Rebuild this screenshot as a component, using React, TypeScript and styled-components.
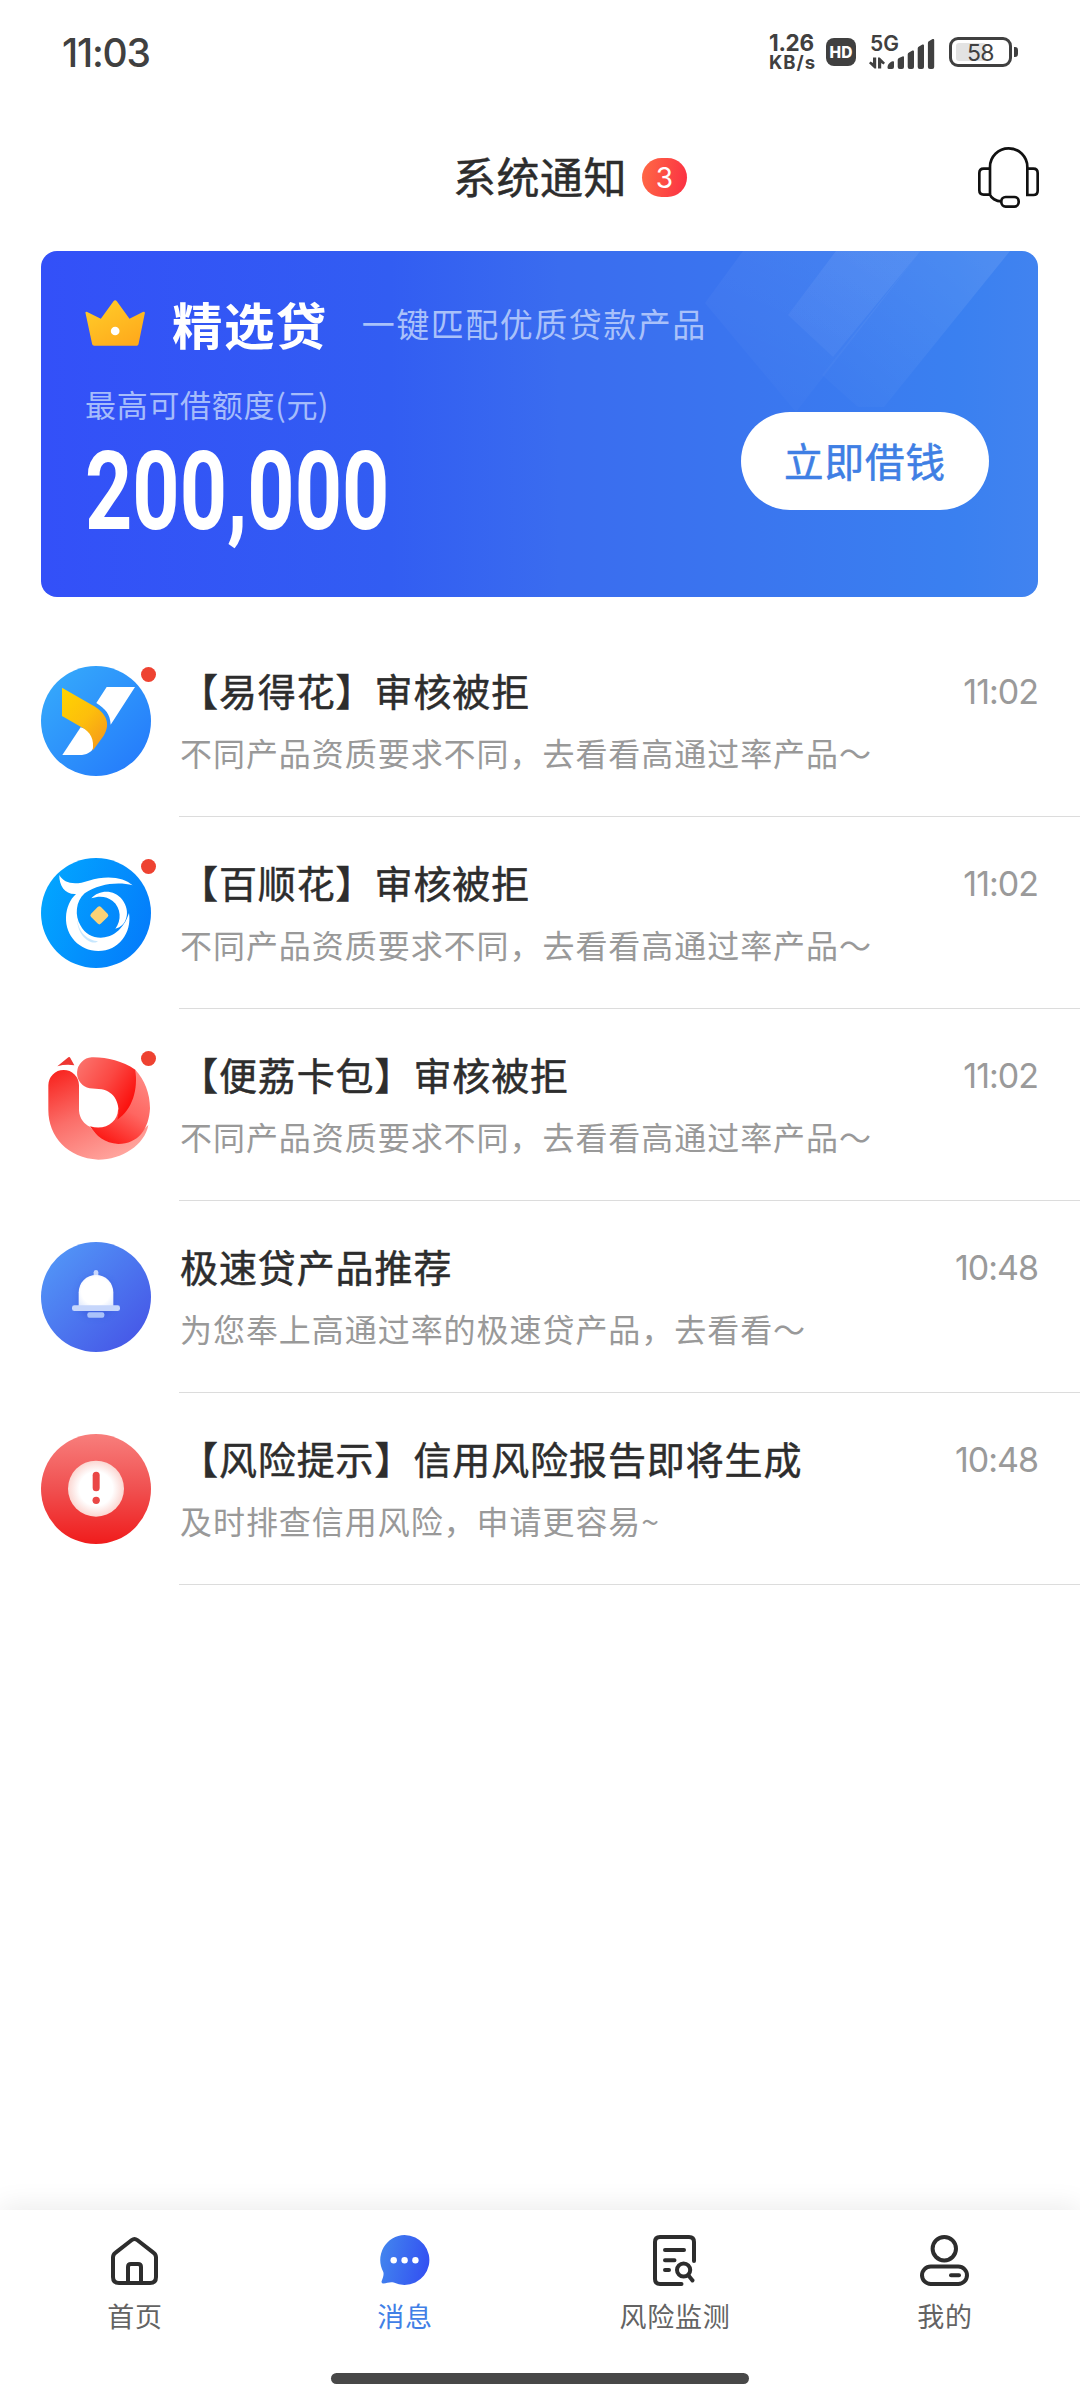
import React from "react";
import styled, { createGlobalStyle } from "styled-components";

const CJK = `"Noto Sans CJK SC", sans-serif`;
const LATIN = `Inter, "Noto Sans CJK SC", sans-serif`;

const GlobalStyle = createGlobalStyle`
  * { box-sizing: border-box; }
  body { margin: 0; background: #fff; font-family: ${CJK}; -webkit-font-smoothing: antialiased; }
  svg { display: block; }
`;

const Screen = styled.div`
  width: 1080px;
  height: 2400px;
  display: flex;
  flex-direction: column;
  overflow: hidden;
  background: #fff;
  color: #2d2d2d;
  white-space: nowrap;
`;

/* ---------- status bar ---------- */
const StatusBar = styled.header`
  height: 104px;
  padding: 0 62px 0 62px;
  display: flex;
  align-items: center;
  justify-content: space-between;
  color: #404040;
  font-family: ${LATIN};
`;
const Clock = styled.div`
  font-size: 39px;
  line-height: 48px;
  font-weight: 500;
  letter-spacing: -1.2px;
  padding-top: 1px;
`;
const StatusRight = styled.div`
  display: flex;
  align-items: center;
`;
const NetSpeed = styled.div`
  width: 57px;
  padding-top: 1px;
  display: flex;
  flex-direction: column;
  font-weight: 700;
`;
const SpeedValue = styled.span`
  font-size: 22.5px;
  line-height: 20px;
  letter-spacing: -0.3px;
`;
const SpeedUnit = styled.span`
  font-size: 18.5px;
  line-height: 19px;
  letter-spacing: 1px;
`;
const HdBadge = styled.div`
  width: 30px;
  height: 28px;
  margin-right: 13px;
  border-radius: 8px;
  background: #404040;
  color: #fff;
  display: flex;
  align-items: center;
  justify-content: center;
  font-size: 15.5px;
  font-weight: 800;
`;
const Signal = styled.div`
  width: 66px;
  height: 34px;
  margin-right: 14px;
  position: relative;
`;
const SignalLabel = styled.span`
  position: absolute;
  left: 1px;
  top: -1px;
  font-size: 21px;
  line-height: 20px;
  font-weight: 600;
`;
const Battery = styled.div`
  width: 63px;
  height: 30px;
  border: 3px solid #404040;
  border-radius: 9px;
  padding: 3px 4px;
  position: relative;
  display: flex;
`;
const BatteryFill = styled.div`
  width: 30px;
  border-radius: 3px;
  background: #e3e3e3;
`;
const BatteryText = styled.span`
  position: absolute;
  inset: 0;
  text-align: center;
  font-size: 23px;
  line-height: 26px;
  letter-spacing: -0.5px;
`;
const BatteryTip = styled.div`
  width: 4px;
  height: 10px;
  margin-left: 2px;
  border-radius: 0 3px 3px 0;
  background: #404040;
`;

/* ---------- title bar ---------- */
const TitleBar = styled.div`
  height: 147px;
  padding: 0 41px;
  display: grid;
  grid-template-columns: 1fr auto 1fr;
  align-items: center;
`;
const Title = styled.h1`
  grid-column: 2;
  margin: 0;
  padding-bottom: 5px;
  font-size: 43px;
  line-height: 60px;
  font-weight: 400;
  -webkit-text-stroke: 0.5px currentColor;
  letter-spacing: 0.5px;
`;
const TitleSide = styled.div`
  display: flex;
  align-items: center;
  justify-content: space-between;
  padding-left: 15px;
`;
const CountBadge = styled.span`
  width: 45px;
  height: 39px;
  border-radius: 20px;
  background: linear-gradient(100deg, #ff6a45, #fb2f43);
  color: #fff;
  display: flex;
  align-items: center;
  justify-content: center;
  font: 400 28px/38px ${LATIN};
`;

/* ---------- promo card ---------- */
const Card = styled.section`
  width: 997px;
  height: 346px;
  margin-left: 41px;
  padding: 41px 49px 0 44px;
  border-radius: 16px;
  background: linear-gradient(90deg, #3350f8 0%, #325df2 35%, #3a6cef 52%, #3a75ef 70%, #3a80f0 92%, #4183f0 100%);
  position: relative;
  overflow: hidden;
  color: #fff;
`;
const CardPattern = styled.svg`
  position: absolute;
  inset: 0;
`;
const CardHead = styled.div`
  height: 62px;
  display: flex;
  align-items: center;
  position: relative;
`;
const CardName = styled.h2`
  margin: 0 34px 0 27px;
  padding-bottom: 1px;
  font-size: 50.5px;
  line-height: 62px;
  font-weight: 700;
  letter-spacing: 1.4px;
`;
const CardSlogan = styled.span`
  font-size: 33px;
  letter-spacing: 1.5px;
  color: #a9c1fa;
`;
const CardBody = styled.div`
  display: flex;
  justify-content: space-between;
  position: relative;
`;
const Quota = styled.div`
  padding-top: 29px;
`;
const QuotaLabel = styled.div`
  font-size: 31px;
  line-height: 42px;
  letter-spacing: 0.7px;
  color: #a5bcfb;
`;
const QuotaValue = styled.div`
  margin-top: 17px;
  font: 700 109px/100px Roboto, sans-serif;
  transform: scaleX(0.757);
  transform-origin: 0 50%;
`;
const BorrowButton = styled.button`
  width: 248px;
  height: 98px;
  margin-top: 58px;
  padding: 0 0 3px;
  border: 0;
  border-radius: 49px;
  background: #fff;
  color: #3f7fe4;
  font: 400 39.5px/56px ${CJK};
  -webkit-text-stroke: 0.6px currentColor;
  letter-spacing: 1px;
`;

/* ---------- message list ---------- */
const List = styled.main`
  flex: 1;
  padding-top: 28px;
`;
const Row = styled.article`
  height: 192px;
  padding-left: 41px;
  display: flex;
`;
const Avatar = styled.div`
  width: 110px;
  height: 110px;
  margin: 41px 28px 0 0;
  position: relative;
`;
const UnreadDot = styled.i`
  position: absolute;
  right: -5px;
  top: 1px;
  width: 15px;
  height: 15px;
  border-radius: 50%;
  background: #ee4231;
`;
const RowContent = styled.div`
  flex: 1;
  padding: 40px 42px 0 1px;
  border-bottom: 1px solid #dcdcdc;
`;
const RowTop = styled.div`
  display: flex;
  justify-content: space-between;
  height: 54px;
`;
const RowTitle = styled.h3`
  margin: -2px 0 0;
  font-size: 38px;
  line-height: 54px;
  font-weight: 400;
  -webkit-text-stroke: 0.5px currentColor;
  letter-spacing: 0.9px;
`;
const RowTime = styled.time`
  font: 400 34px/54px ${LATIN};
  letter-spacing: -1px;
  color: #9a9a9a;
`;
const RowText = styled.p`
  margin: 9px 0 0;
  font-size: 32px;
  line-height: 48px;
  letter-spacing: 0.95px;
  color: #999;
`;

/* ---------- tab bar ---------- */
const TabBar = styled.nav`
  height: 190px;
  background: #fff;
  box-shadow: 0 -4px 26px rgba(0, 0, 0, 0.08);
  display: flex;
  flex-direction: column;
  align-items: center;
`;
const Tabs = styled.div`
  width: 1080px;
  height: 163px;
  display: grid;
  grid-template-columns: repeat(4, 1fr);
`;
const Tab = styled.div<{ $active?: boolean }>`
  padding-top: 25px;
  display: flex;
  flex-direction: column;
  align-items: center;
  font-size: 27px;
  line-height: 40px;
  letter-spacing: 0.8px;
  color: ${(p) => (p.$active ? "#4180e6" : "#636363")};
`;
const TabLabel = styled.span`
  margin-top: 9px;
`;
const HomeIndicator = styled.div`
  width: 418px;
  height: 11px;
  border-radius: 6px;
  background: #484848;
`;

/* ---------- drawings ---------- */
const SignalBars = () => (
  <svg width="66" height="34" viewBox="0 0 66 34" fill="#404040">
    <path d="M4 22.500h3.200V33.500H5.500L0 28.200l1.500-1.700L4 28zM9 33.500v-11h1.700l5.300 5.300-1.500 1.700-2.300-1.500v5.500z" />
    <path d="M18.500 32.500c0-3 2.500-5.500 5.300-6.200q1.200-.3 1.200.7V32q0 2-2 2h-3q-1.500 0-1.500-1.500z" />
    <path d="M28.700 25q0-1.500 1.300-2l3.400-1.600q1.600-.6 1.600.9V32q0 2-2 2h-2.300q-2 0-2-2z" />
    <path d="M38.700 19.500q0-1.500 1.300-2l3.400-1.900q1.600-.6 1.600.9V32q0 2-2 2h-2.300q-2 0-2-2z" />
    <path d="M48.700 13.500q0-1.500 1.300-2l3.400-1.900q1.600-.6 1.600.9V32q0 2-2 2h-2.300q-2 0-2-2z" />
    <path d="M58.900 8q0-1.500 1.300-2l3.400-1.900q1.600-.6 1.600.9V32q0 2-2 2h-2.300q-2 0-2-2z" />
  </svg>
);

const Headset = () => (
  <svg width="61" height="61" viewBox="714 444 183 183" fill="none" stroke="#111" strokeWidth="8">
    <path d="M750 585V504a56 56 0 0 1 112 0v84h18q13 0 13-13v-53q0-13-13-13h-18" />
    <path d="M750 509h-19q-13 0-13 13v52q0 13 13 13h19c3 10 18 20 34 20" />
    <rect x="784" y="594" width="52" height="29" rx="13" />
  </svg>
);

const Crown = () => (
  <svg width="60" height="46" viewBox="164 182 179 138">
    <defs>
      <linearGradient id="crown" x1="0" y1="0" x2="0.7" y2="1">
        <stop offset="0" stopColor="#ffcf2a" />
        <stop offset="1" stopColor="#ffab1c" />
      </linearGradient>
    </defs>
    <path
      fill="url(#crown)"
      d="M165 221q-1-5 5-3l41 20 38-52q5-6 10 0l38 52 40-20q7-2 6 4l-19 93q-1 4-5 4H191q-5 0-6-4z"
    />
    <circle cx="254" cy="275" r="13" fill="#fff" />
  </svg>
);

const Pattern = () => (
  <CardPattern width="997" height="346" viewBox="0 0 997 346">
    <defs>
      <linearGradient id="beam" gradientUnits="userSpaceOnUse" x1="860" y1="0" x2="770" y2="120">
        <stop offset="0" stopColor="#fff" stopOpacity="0.08" />
        <stop offset="1" stopColor="#fff" stopOpacity="0.03" />
      </linearGradient>
      <linearGradient id="beamRight" gradientUnits="userSpaceOnUse" x1="940" y1="0" x2="820" y2="150">
        <stop offset="0" stopColor="#fff" stopOpacity="0.09" />
        <stop offset="1" stopColor="#fff" stopOpacity="0.02" />
      </linearGradient>
      <linearGradient id="beamLeft" gradientUnits="userSpaceOnUse" x1="800" y1="0" x2="730" y2="150">
        <stop offset="0" stopColor="#fff" stopOpacity="0.05" />
        <stop offset="1" stopColor="#fff" stopOpacity="0.015" />
      </linearGradient>
    </defs>
    <path d="M702 0h177.500L755 161 664 52z" fill="url(#beamLeft)" />
    <path d="M795 0h84.500L792 106 747 64z" fill="url(#beam)" />
    <path d="M879.500 0H969L843 156h-26l-36-32z" fill="url(#beamRight)" />
  </CardPattern>
);

const YidehuaLogo = () => (
  <svg width="110" height="110" viewBox="33 48 330 330">
    <defs>
      <linearGradient id="ydBg" x1="0.1" y1="0.1" x2="0.9" y2="0.9">
        <stop offset="0" stopColor="#35a8fb" />
        <stop offset="1" stopColor="#257cfb" />
      </linearGradient>
      <linearGradient id="ydGold" x1="0" y1="0" x2="0.8" y2="1">
        <stop offset="0" stopColor="#ffd400" />
        <stop offset="0.55" stopColor="#fdbe0c" />
        <stop offset="1" stopColor="#f59a1a" />
      </linearGradient>
    </defs>
    <circle cx="198" cy="213" r="165" fill="url(#ydBg)" />
    <path fill="#fff" d="M230 111h85l-73 113c-2-32-15-47-43-65z" />
    <path fill="#fff" d="M152 232c32 8 43 30 38 62-6 13-20 21-42 21H97z" />
    <path fill="url(#ydGold)" d="M96 113l90 52c46 25 56 58 35 92l-33 45c5-33-4-56-36-72l-56-32z" />
  </svg>
);

const BaishunhuaLogo = () => (
  <svg width="110" height="110" viewBox="33 54 330 330">
    <defs>
      <linearGradient id="bsBg" x1="0" y1="0.3" x2="1" y2="0.7">
        <stop offset="0" stopColor="#02a5ff" />
        <stop offset="1" stopColor="#047cfb" />
      </linearGradient>
    </defs>
    <circle cx="198" cy="219" r="165" fill="url(#bsBg)" />
    <path
      fill="#fff"
      d="M88 105c14 26 47 31 88 17 55-18 107-10 132 14-40-12-102-6-144 24-27 23-31 68-12 97 29 54 116 52 145-38 9 60-31 114-92 114-57 0-99-46-97-101 1-28 12-54 30-70-33 2-51-25-50-57z"
    />
    <path fill="#8fd0fd" opacity="0.5" d="M141 238c7 46 36 63 63 66-15 13-60-8-63-66z" />
    <path fill="#fff" d="M184 175c24-27 69-27 93 4 26 34 14 79-21 87 19-24 18-62-8-83-17-14-40-17-64-8z" />
    <rect x="187" y="205" width="42" height="42" rx="7" fill="#fbd276" transform="rotate(45 208 226)" />
  </svg>
);

const BianliLogo = () => (
  <svg width="110" height="110" viewBox="33 60 330 330">
    <defs>
      <linearGradient id="blLeft" x1="0.1" y1="0" x2="0.6" y2="1">
        <stop offset="0" stopColor="#f8241f" />
        <stop offset="0.5" stopColor="#fb6e69" />
        <stop offset="1" stopColor="#ffa39c" />
      </linearGradient>
      <linearGradient id="blTop" x1="0" y1="0.2" x2="0.9" y2="0.8">
        <stop offset="0" stopColor="#fb6f69" />
        <stop offset="0.5" stopColor="#fb4742" />
        <stop offset="1" stopColor="#fb0e0b" />
      </linearGradient>
      <linearGradient id="blRight" x1="0.8" y1="0" x2="0.3" y2="1">
        <stop offset="0" stopColor="#ff8b85" />
        <stop offset="0.5" stopColor="#fe6661" />
        <stop offset="1" stopColor="#fc1814" />
      </linearGradient>
    </defs>
    <path fill="#ee3732" d="M82 109l33-27q4-2 6 2l12 22q-26-4-51 3z" />
    <path
      fill="url(#blLeft)"
      d="M55 166a46 46 0 0 1 92 0v76c2 24 16 40 33 48 35 50 100 66 175-5-11 60-79 104-150 104-92-5-150-69-150-149z"
    />
    <path
      fill="url(#blRight)"
      d="M316 119c28 31 44 70 44 116-3 63-36 107-95 107-41-2-66-24-85-53 47 14 83-14 84-49 38-33 53-78 52-121z"
    />
    <path
      fill="url(#blTop)"
      d="M185 82a47 47 0 0 0-6 93l36 3c37 6 60 44 47 91 47-33 62-92 54-150-41-27-86-38-131-37z"
    />
  </svg>
);

const BellLogo = () => (
  <svg width="110" height="110" viewBox="33 66 330 330">
    <defs>
      <linearGradient id="bellBg" x1="0.1" y1="0.2" x2="0.8" y2="0.9">
        <stop offset="0" stopColor="#5191f6" />
        <stop offset="1" stopColor="#475be8" />
      </linearGradient>
      <radialGradient id="bellFill" cx="0.5" cy="0.5" r="0.7">
        <stop offset="0.6" stopColor="#fff" />
        <stop offset="1" stopColor="#dbe5fc" />
      </radialGradient>
      <filter id="bellShade" x="-30%" y="-30%" width="160%" height="160%">
        <feGaussianBlur stdDeviation="10" />
      </filter>
    </defs>
    <circle cx="198" cy="231" r="165" fill="url(#bellBg)" />
    <path fill="#2c49cf" opacity="0.35" filter="url(#bellShade)" d="M146 268v-48a52 52 0 0 1 104 0v48l-25 22h-55z" />
    <rect x="191" y="150" width="14" height="24" rx="7" fill="#cad8fc" />
    <rect x="172" y="277" width="51" height="16" rx="6" fill="#aac2fa" />
    <path fill="url(#bellFill)" d="M146 262v-45a52 52 0 0 1 104 0v45z" />
    <rect x="126" y="256" width="144" height="17" rx="7" fill="#c6d6fb" />
  </svg>
);

const AlertLogo = () => (
  <svg width="110" height="110" viewBox="33 642 330 330">
    <defs>
      <linearGradient id="alertBg" x1="0.5" y1="0" x2="0.5" y2="1">
        <stop offset="0" stopColor="#f87e7c" />
        <stop offset="0.5" stopColor="#f05050" />
        <stop offset="1" stopColor="#f01c1c" />
      </linearGradient>
      <radialGradient id="alertFill">
        <stop offset="0.6" stopColor="#fff" />
        <stop offset="1" stopColor="#fbd6d1" />
      </radialGradient>
    </defs>
    <circle cx="198" cy="807" r="165" fill="url(#alertBg)" />
    <circle cx="198" cy="806" r="84" fill="url(#alertFill)" />
    <rect x="188" y="755" width="21" height="59" rx="10.500" fill="#ea4746" />
    <circle cx="198.500" cy="841" r="11" fill="#ea4746" />
  </svg>
);

const HomeIcon = () => (
  <svg width="52" height="52" viewBox="0 0 52 52" fill="none" stroke="#2d2d2d" strokeWidth="4" strokeLinejoin="round">
    <path d="M4 22.500q0-3 2.300-4.700L22.800 5q2.700-2.100 5.400 0l16.500 12.800Q47 19.500 47 22.500V42q0 6-6 6H10q-6 0-6-6z" />
    <path d="M19 48V32q0-3 3-3h7q3 0 3 3v16" />
  </svg>
);
const ChatIcon = () => (
  <svg width="52" height="52" viewBox="0 0 52 52">
    <defs>
      <linearGradient id="chat" x1="0" y1="0.4" x2="1" y2="0.6">
        <stop offset="0" stopColor="#4284ee" />
        <stop offset="1" stopColor="#3350f2" />
      </linearGradient>
    </defs>
    <path
      fill="url(#chat)"
      d="M25.500 0a25 25 0 1 1-10.800 47.600c-3.500-1-6.700.6-10.200.9q-2.300 0-1.900-2.200c1-3 2.600-6.300 1.700-9.300A25 25 0 0 1 25.500 0z"
    />
    <g fill="#fff">
      <circle cx="14.700" cy="25.300" r="3.200" />
      <circle cx="25.600" cy="25.300" r="3.200" />
      <circle cx="36.400" cy="25.300" r="3.200" />
    </g>
  </svg>
);
const ReportIcon = () => (
  <svg width="52" height="52" viewBox="0 0 52 52" fill="none" stroke="#2d2d2d" strokeWidth="4" strokeLinecap="round">
    <path d="M45 26V7q0-5-5-5H11Q6 2 6 7v37q0 5 5 5h21.500M16 15h19M16 25.300h9.500M16 35h4" />
    <circle cx="34.600" cy="35" r="6.600" />
    <path d="M39.500 40.500l4 5" />
  </svg>
);
const MeIcon = () => (
  <svg width="52" height="52" viewBox="0 0 52 52" fill="none" stroke="#2d2d2d" strokeWidth="4" strokeLinecap="round">
    <circle cx="25.300" cy="13.700" r="11.700" />
    <rect x="3" y="31.500" width="45" height="17.500" rx="8.700" />
    <path d="M32 40.300h8" />
  </svg>
);

const messages = [
  { logo: <YidehuaLogo />, unread: true, title: "【易得花】审核被拒", text: "不同产品资质要求不同，去看看高通过率产品～", time: "11:02" },
  { logo: <BaishunhuaLogo />, unread: true, title: "【百顺花】审核被拒", text: "不同产品资质要求不同，去看看高通过率产品～", time: "11:02" },
  { logo: <BianliLogo />, unread: true, title: "【便荔卡包】审核被拒", text: "不同产品资质要求不同，去看看高通过率产品～", time: "11:02" },
  { logo: <BellLogo />, unread: false, title: "极速贷产品推荐", text: "为您奉上高通过率的极速贷产品，去看看～", time: "10:48" },
  { logo: <AlertLogo />, unread: false, title: "【风险提示】信用风险报告即将生成", text: "及时排查信用风险，申请更容易~", time: "10:48" },
];

const tabs = [
  { icon: <HomeIcon />, label: "首页" },
  { icon: <ChatIcon />, label: "消息", active: true },
  { icon: <ReportIcon />, label: "风险监测" },
  { icon: <MeIcon />, label: "我的" },
];

export default function App() {
  return (
    <Screen lang="zh-CN">
      <GlobalStyle />
      <StatusBar>
        <Clock>11:03</Clock>
        <StatusRight>
          <NetSpeed>
            <SpeedValue>1.26</SpeedValue>
            <SpeedUnit>KB/s</SpeedUnit>
          </NetSpeed>
          <HdBadge>HD</HdBadge>
          <Signal>
            <SignalLabel>5G</SignalLabel>
            <SignalBars />
          </Signal>
          <Battery>
            <BatteryFill />
            <BatteryText>58</BatteryText>
          </Battery>
          <BatteryTip />
        </StatusRight>
      </StatusBar>

      <TitleBar>
        <Title>系统通知</Title>
        <TitleSide>
          <CountBadge>3</CountBadge>
          <Headset />
        </TitleSide>
      </TitleBar>

      <Card>
        <Pattern />
        <CardHead>
          <Crown />
          <CardName>精选贷</CardName>
          <CardSlogan>一键匹配优质贷款产品</CardSlogan>
        </CardHead>
        <CardBody>
          <Quota>
            <QuotaLabel>最高可借额度(元)</QuotaLabel>
            <QuotaValue>200,000</QuotaValue>
          </Quota>
          <BorrowButton>立即借钱</BorrowButton>
        </CardBody>
      </Card>

      <List>
        {messages.map((m) => (
          <Row key={m.title}>
            <Avatar>
              {m.logo}
              {m.unread && <UnreadDot />}
            </Avatar>
            <RowContent>
              <RowTop>
                <RowTitle>{m.title}</RowTitle>
                <RowTime>{m.time}</RowTime>
              </RowTop>
              <RowText>{m.text}</RowText>
            </RowContent>
          </Row>
        ))}
      </List>

      <TabBar>
        <Tabs>
          {tabs.map((t) => (
            <Tab key={t.label} $active={t.active}>
              {t.icon}
              <TabLabel>{t.label}</TabLabel>
            </Tab>
          ))}
        </Tabs>
        <HomeIndicator />
      </TabBar>
    </Screen>
  );
}
